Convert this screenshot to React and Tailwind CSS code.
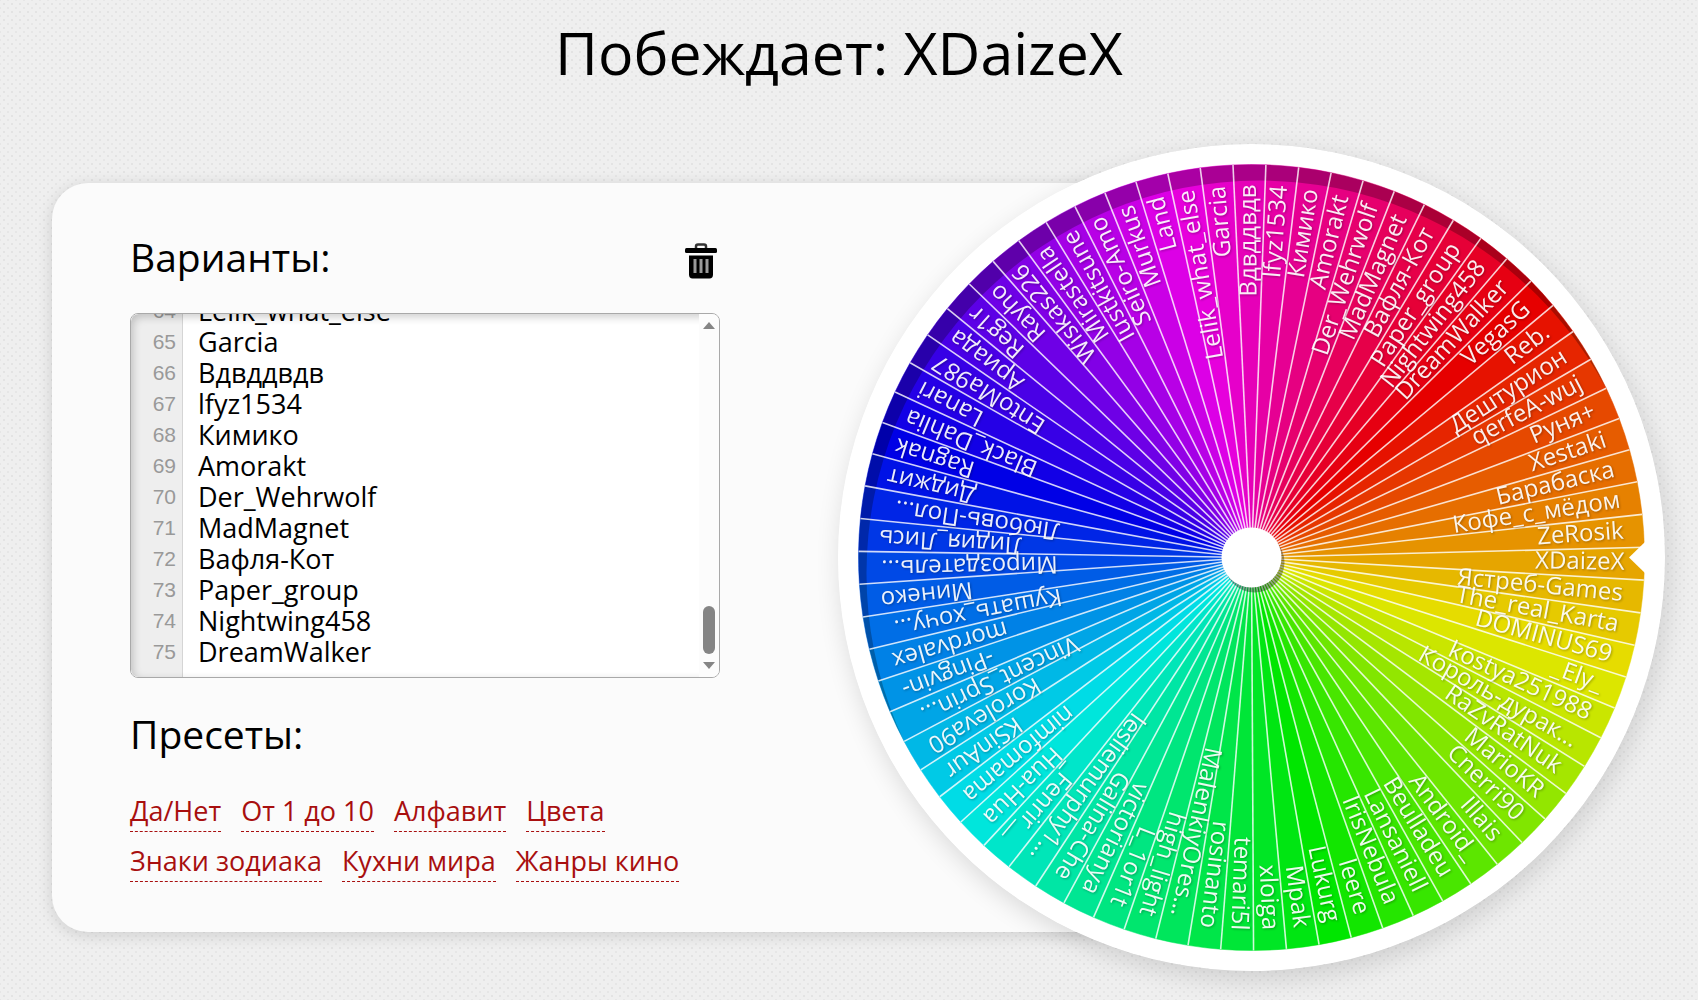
import { useLayoutEffect, useRef, useState } from 'react';

const NAMES = [
  'VegasG', 'Reb.', 'Дештурион', 'qerfeA-wuj', 'Руня+', 'Xestaki', 'Барабаска', 'Кофе_с_мёдом',
  'ZeRosik', 'XDaizeX', 'Ястреб-Games', 'The_real_Karta', 'DOMINUS69', '_Ely_', 'kostya251988',
  'Король-дурак...', 'RaZvRatNuk', 'MarioKR', 'Cnerri90', 'Illais', 'Android_', 'Beulladeu',
  'Lansaniell', 'IrisNebula', 'leere', 'Lukurg', 'Mpak', 'xloiga', 'temari5l', 'rosinanto',
  'MalenkiyOres...', 'high_light', 'L_1or1t', 'victorianya', 'Galina-Che', 'lesliemurphy1...',
  '_Fenrir__', 'Hua-Hua', 'nimfomama', 'KSinAur', 'Koroleva90', 'Vincent_Sprin...', '-Pingvin-',
  'mordvalex', 'Кушать_хочу...', 'Минеко', 'Мироздатель...', 'Лидия_Лись', 'Любовь-Пол...',
  'Диджит', 'Ragnak', 'Black_Dahlia', 'Lanari', 'EntoMa987', 'Ариада', 'Reg1r', 'Rayho',
  'Wiskas226', 'Mirastella', 'Iustkitsune', 'Seiro-Amo', 'Murkus', 'Land', 'Lelik_what_else',
  'Garcia', 'Вдвддвдв', 'lfyz1534', 'Кимико', 'Amorakt', 'Der_Wehrwolf', 'MadMagnet',
  'Вафля-Кот', 'Paper_group', 'Nightwing458', 'DreamWalker',
];

const PRESETS = ['Да/Нет', 'От 1 до 10', 'Алфавит', 'Цвета', 'Знаки зодиака', 'Кухни мира', 'Жанры кино'];

const WINNER = 9;
const CENTER = 413.5;
const RADIUS = 393;
const STEP = 360 / NAMES.length;
// angle at which the wheel stopped, relative to the middle of the winning sector
const STOP = 0.9;

const LINE_HEIGHT = 31;
const PADDING_TOP = 8;
const VISIBLE_LINES = 12;

const point = (angle, r) => {
  const rad = (angle * Math.PI) / 180;
  return [CENTER + r * Math.cos(rad), CENTER + r * Math.sin(rad)];
};

const sectorAngle = (i) => STOP + (i - WINNER) * STEP;

const sectorPath = (i) => {
  const [x1, y1] = point(sectorAngle(i) - STEP / 2, RADIUS);
  const [x2, y2] = point(sectorAngle(i) + STEP / 2, RADIUS);
  return `M${CENTER} ${CENTER}L${x1} ${y1}A${RADIUS} ${RADIUS} 0 0 1 ${x2} ${y2}Z`;
};

function Wheel() {
  return (
    <svg viewBox="0 0 827 827" className="block w-full h-auto rounded-full" role="img" aria-label="Колесо">
      <circle cx={CENTER} cy={CENTER} r={CENTER} fill="#fff" />

      {/* Sectors */}
      {NAMES.map((name, i) => {
        const color = `hsl(${i * STEP} 100% 45%)`;
        return <path key={name} d={sectorPath(i)} fill={color} stroke={color} strokeWidth="0.5" />;
      })}

      {/* Shadow of the rim */}
      <path
        fill="#000"
        fillOpacity="0.26"
        fillRule="evenodd"
        clipPath="url(#disc)"
        d="M0 0H827V827H0Z M28.5 429.5a393 393 0 0 0 786 0a393 393 0 0 0 -786 0Z"
      />
      <clipPath id="disc">
        <circle cx={CENTER} cy={CENTER} r={RADIUS} />
      </clipPath>

      {/* Dividers */}
      <g stroke="#fff" strokeOpacity="0.8" strokeWidth="1.6">
        {NAMES.map((name, i) => {
          const [x, y] = point(sectorAngle(i) - STEP / 2, RADIUS);
          return <line key={name} x1={CENTER} y1={CENTER} x2={x} y2={y} />;
        })}
      </g>

      {/* Labels: shortened names start at a fixed radius, the others end at the rim */}
      <g className="font-['Open_Sans',sans-serif] text-[24px] drop-shadow-[1px_1px_1px_rgba(0,0,0,0.3)]" fill="#fff" fillOpacity="0.92">
        {NAMES.map((name, i) => {
          const cut = name.endsWith('...');
          return (
            <text
              key={name}
              x={CENTER + (cut ? 194 : 373)}
              y={CENTER}
              textAnchor={cut ? 'start' : 'end'}
              dominantBaseline="middle"
              transform={`rotate(${sectorAngle(i)} ${CENTER} ${CENTER})`}
            >
              {name}
            </text>
          );
        })}
      </g>

      {/* Pointer */}
      <path d="M791 413.5L809 396V431Z" fill="#fff" />

      {/* Hub */}
      <circle cx="416.5" cy="418.5" r="30" fill="#000" fillOpacity="0.35" />
      <circle cx="413.5" cy="413.5" r="30" fill="#fff" />
    </svg>
  );
}

function TrashIcon() {
  return (
    <svg viewBox="0 0 32 36" className="w-8 h-9 block" fill="none">
      <path d="M11 5V3.500Q11 1.500 13 1.500H19Q21 1.500 21 3.500V5" stroke="#333" strokeWidth="2.5" />
      <rect x="0" y="5" width="32" height="5" rx="1.500" fill="#000" />
      <path d="M4 12.500H28V31.500Q28 35.500 24.500 35.500H7.500Q4 35.500 4 31.500Z" fill="#000" />
      <path d="M10 16V30M16 16V30M22 16V30" stroke="#9a9a9a" strokeWidth="3" />
    </svg>
  );
}

function VariantsEditor() {
  const [value, setValue] = useState(NAMES.join('\n'));
  const [scroll, setScroll] = useState(0);
  const ref = useRef(null);

  useLayoutEffect(() => {
    ref.current.scrollTop = ref.current.scrollHeight;
    setScroll(ref.current.scrollTop);
  }, []);

  const first = Math.max(0, Math.floor((scroll - PADDING_TOP) / LINE_HEIGHT));
  const numbers = value.split('\n').map((_, i) => i + 1).slice(first, first + VISIBLE_LINES);
  const shift = PADDING_TOP + first * LINE_HEIGHT - scroll;

  return (
    <div className="relative flex h-[365px] mt-[30px] rounded-lg border border-[#a9a9a9] bg-white overflow-hidden">
      <div className="w-[52px] shrink-0 bg-[#eee] border-r border-[#d5d5d5] overflow-hidden">
        <div
          className="pr-[6px] text-right font-['Liberation_Sans',sans-serif] text-[21px] leading-[31px] text-[#999]"
          style={{ transform: `translateY(${shift}px)` }}
        >
          {numbers.map((n) => (
            <div key={n}>{n}</div>
          ))}
        </div>
      </div>
      <textarea
        id="variants"
        ref={ref}
        value={value}
        onChange={(e) => setValue(e.target.value)}
        onScroll={(e) => setScroll(e.currentTarget.scrollTop)}
        spellCheck={false}
        wrap="off"
        className="flex-1 min-w-0 pt-2 pb-[10px] pl-[15px] resize-none outline-none bg-transparent text-[27px] leading-[31px] text-black [scrollbar-width:none]"
      />
      <div className="pointer-events-none absolute inset-0 rounded-lg shadow-[inset_2px_3px_8px_rgba(0,0,0,0.2)]" />

      {/* Scrollbar */}
      <div className="absolute inset-y-0 right-0 w-5 bg-[#fcfcfc] flex flex-col items-center justify-between py-2">
        <svg viewBox="0 0 12 7" className="w-3 h-[7px]" fill="#858585"><path d="M6 0L12 7H0Z" /></svg>
        <div className="flex-1" />
        <div className="w-3 h-12 mb-2 rounded-full bg-[#858585]" />
        <svg viewBox="0 0 12 7" className="w-3 h-[7px]" fill="#858585"><path d="M0 0H12L6 7Z" /></svg>
      </div>
    </div>
  );
}

export default function App() {
  return (
    <div className="min-h-screen bg-[#efefef] bg-[radial-gradient(#e3e3e3_1px,transparent_1px),radial-gradient(#e6e6e6_1px,transparent_1px)] bg-size-[8px_8px] bg-position-[0_0,4px_4px] font-['Open_Sans',sans-serif] text-black">
      <h1 className="h-36 pt-3 pr-5 text-center text-[59px] leading-[80px]">Побеждает: {NAMES[WINNER]}</h1>

      <main className="flex items-center pl-[52px] pr-[33px] pb-[29px]">
        <section className="flex-1 min-w-0 rounded-[36px] bg-[#fbfbfb] pt-12 pb-[50px] pl-[78px] shadow-[0_3px_16px_rgba(0,0,0,0.14)]">
          <div className="w-[590px]">
            <div className="flex items-end justify-between pr-[3px]">
              <label htmlFor="variants" className="text-[39px] leading-[52px]">Варианты:</label>
              <button type="button" aria-label="Очистить" className="pb-1">
                <TrashIcon />
              </button>
            </div>
            <VariantsEditor />

            <h2 className="mt-[30px] text-[39px] leading-[52px]">Пресеты:</h2>
            <div className="mt-8 flex flex-wrap gap-x-5 gap-y-[10px]">
              {PRESETS.map((preset) => (
                <a
                  key={preset}
                  href="#"
                  className="pb-[2px] border-b border-dashed border-[#a80f0f] text-[27px] leading-[37px] text-[#a80f0f]"
                >
                  {preset}
                </a>
              ))}
            </div>
          </div>
        </section>

        <div className="relative w-[827px] shrink-0 -ml-[414px] rounded-full shadow-[3px_8px_26px_rgba(0,0,0,0.14)]">
          <Wheel />
        </div>
      </main>
    </div>
  );
}
